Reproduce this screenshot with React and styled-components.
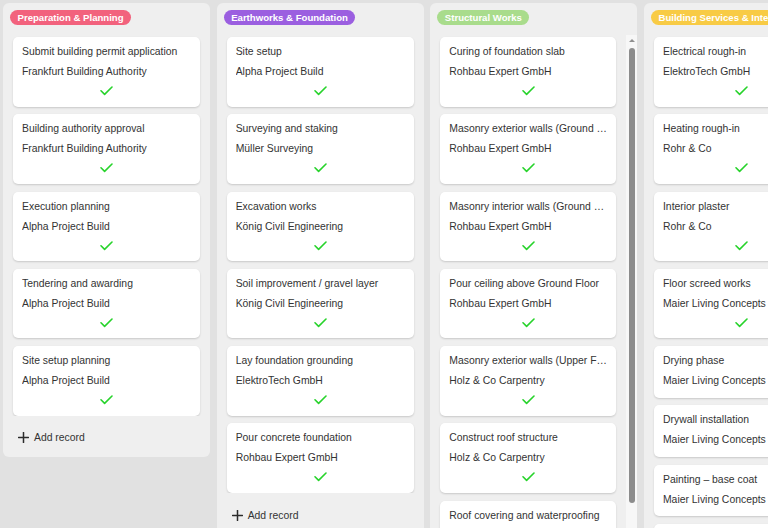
import React from 'react';
import styled, { createGlobalStyle } from 'styled-components';

const columns = [
  {
    title: 'Preparation & Planning',
    color: '#f2627d',
    cards: [
      { title: 'Submit building permit application', company: 'Frankfurt Building Authority', done: true },
      { title: 'Building authority approval', company: 'Frankfurt Building Authority', done: true },
      { title: 'Execution planning', company: 'Alpha Project Build', done: true },
      { title: 'Tendering and awarding', company: 'Alpha Project Build', done: true },
      { title: 'Site setup planning', company: 'Alpha Project Build', done: true },
    ],
  },
  {
    title: 'Earthworks & Foundation',
    color: '#9b5fe0',
    cards: [
      { title: 'Site setup', company: 'Alpha Project Build', done: true },
      { title: 'Surveying and staking', company: 'Müller Surveying', done: true },
      { title: 'Excavation works', company: 'König Civil Engineering', done: true },
      { title: 'Soil improvement / gravel layer', company: 'König Civil Engineering', done: true },
      { title: 'Lay foundation grounding', company: 'ElektroTech GmbH', done: true },
      { title: 'Pour concrete foundation', company: 'Rohbau Expert GmbH', done: true },
    ],
  },
  {
    title: 'Structural Works',
    color: '#a9dc8c',
    thumb: 455,
    cards: [
      { title: 'Curing of foundation slab', company: 'Rohbau Expert GmbH', done: true },
      { title: 'Masonry exterior walls (Ground Floor)', company: 'Rohbau Expert GmbH', done: true },
      { title: 'Masonry interior walls (Ground Floor)', company: 'Rohbau Expert GmbH', done: true },
      { title: 'Pour ceiling above Ground Floor', company: 'Rohbau Expert GmbH', done: true },
      { title: 'Masonry exterior walls (Upper Floor)', company: 'Holz & Co Carpentry', done: true },
      { title: 'Construct roof structure', company: 'Holz & Co Carpentry', done: true },
      { title: 'Roof covering and waterproofing', company: 'Holz & Co Carpentry', done: true },
    ],
  },
  {
    title: 'Building Services & Interior Finishing',
    color: '#f8cb45',
    thumb: 380,
    cards: [
      { title: 'Electrical rough-in', company: 'ElektroTech GmbH', done: true },
      { title: 'Heating rough-in', company: 'Rohr & Co', done: true },
      { title: 'Interior plaster', company: 'Rohr & Co', done: true },
      { title: 'Floor screed works', company: 'Maier Living Concepts', done: true },
      { title: 'Drying phase', company: 'Maier Living Concepts', done: false },
      { title: 'Drywall installation', company: 'Maier Living Concepts', done: false },
      { title: 'Painting – base coat', company: 'Maier Living Concepts', done: false },
      { title: 'Tiling works', company: 'Maier Living Concepts', done: false },
      { title: 'Final cleaning', company: 'Alpha Project Build', done: false },
    ],
  },
];

const CheckIcon = () => (
  <svg width="13" height="10" viewBox="0 0 13 10" fill="none">
    <path d="M1 4.8 4.6 8.4 12 1" stroke="#27d32b" strokeWidth="1.6" strokeLinecap="round" strokeLinejoin="round" />
  </svg>
);

const PlusIcon = () => (
  <svg width="11" height="11" viewBox="0 0 11 11" fill="none">
    <path d="M5.5 0.5v10M0.5 5.5h10" stroke="#2b2b2b" strokeWidth="1.5" strokeLinecap="round" />
  </svg>
);

const TaskCard = ({ card }) => (
  <Card>
    <Line>{card.title}</Line>
    <Line>{card.company}</Line>
    {card.done && (
      <CheckRow>
        <CheckIcon />
      </CheckRow>
    )}
  </Card>
);

const Lane = ({ column }) => (
  <Column>
    <Header>
      <Badge $color={column.color}>{column.title}</Badge>
    </Header>
    <Body>
      <List>
        {column.cards.map((card, i) => (
          <TaskCard key={i} card={card} />
        ))}
      </List>
      {column.thumb && (
        <Track>
          <Arrow />
          <Thumb style={{ height: column.thumb }} />
        </Track>
      )}
    </Body>
    <Footer>
      <PlusIcon />
      <span>Add record</span>
    </Footer>
  </Column>
);

export default function App() {
  return (
    <>
      <GlobalStyle />
      <Board>
        {columns.map((column, i) => (
          <Lane key={i} column={column} />
        ))}
      </Board>
    </>
  );
}

const GlobalStyle = createGlobalStyle`
  html, body {
    margin: 0;
    padding: 0;
    background: #e1e1e1;
    overflow: hidden;
  }
  body {
    font-family: "Liberation Sans", Arial, sans-serif;
    color: #333;
  }
`;

const Board = styled.div`
  display: flex;
  align-items: flex-start;
  gap: 6.67px;
  padding: 3px;
  height: 600px;
  width: 1200px;
`;

const Column = styled.div`
  flex: 0 0 207px;
  width: 207px;
  max-height: 580px;
  display: flex;
  flex-direction: column;
  background: #efefef;
  border-radius: 6px;
`;

const Header = styled.div`
  flex: none;
  display: flex;
  align-items: flex-start;
  height: 32px;
  padding: 7px 7px 0;
  box-sizing: border-box;
`;

const Badge = styled.span`
  height: 15px;
  line-height: 15px;
  padding: 0 7.5px;
  border-radius: 8px;
  background: ${p => p.$color};
  color: #fff;
  font-weight: bold;
  font-size: 9.6px;
  white-space: nowrap;
`;

const Body = styled.div`
  flex: 1 1 auto;
  min-height: 0;
  display: flex;
`;

const List = styled.div`
  flex: 1 1 auto;
  min-width: 0;
  display: flex;
  flex-direction: column;
  gap: 7.75px;
  padding: 2px 10px 0;
  overflow: hidden;
`;

const Track = styled.div`
  flex: 0 0 11px;
  display: flex;
  flex-direction: column;
  align-items: center;
  background: #f7f7f7;
`;

const Arrow = styled.div`
  margin-top: 4px;
  width: 0;
  height: 0;
  border-left: 3px solid transparent;
  border-right: 3px solid transparent;
  border-bottom: 3.5px solid #8f8f8f;
`;

const Thumb = styled.div`
  margin-top: 5.5px;
  width: 6px;
  border-radius: 3px;
  background: #8c8c8c;
`;

const Card = styled.div`
  flex: none;
  background: #fff;
  border-radius: 5px;
  padding: 5px 9px 6.5px;
  box-shadow: 0 1px 2px rgba(0, 0, 0, 0.16);
  min-width: 0;
`;

const Line = styled.div`
  height: 20px;
  line-height: 20px;
  font-size: 10.4px;
  white-space: nowrap;
  overflow: hidden;
  text-overflow: ellipsis;
`;

const CheckRow = styled.div`
  height: 18px;
  display: flex;
  align-items: center;
  justify-content: center;
`;

const Footer = styled.div`
  flex: none;
  height: 41.5px;
  display: flex;
  align-items: center;
  gap: 5px;
  padding: 3px 0 0 15px;
  box-sizing: border-box;
  font-size: 10.4px;
  color: #333;
`;
